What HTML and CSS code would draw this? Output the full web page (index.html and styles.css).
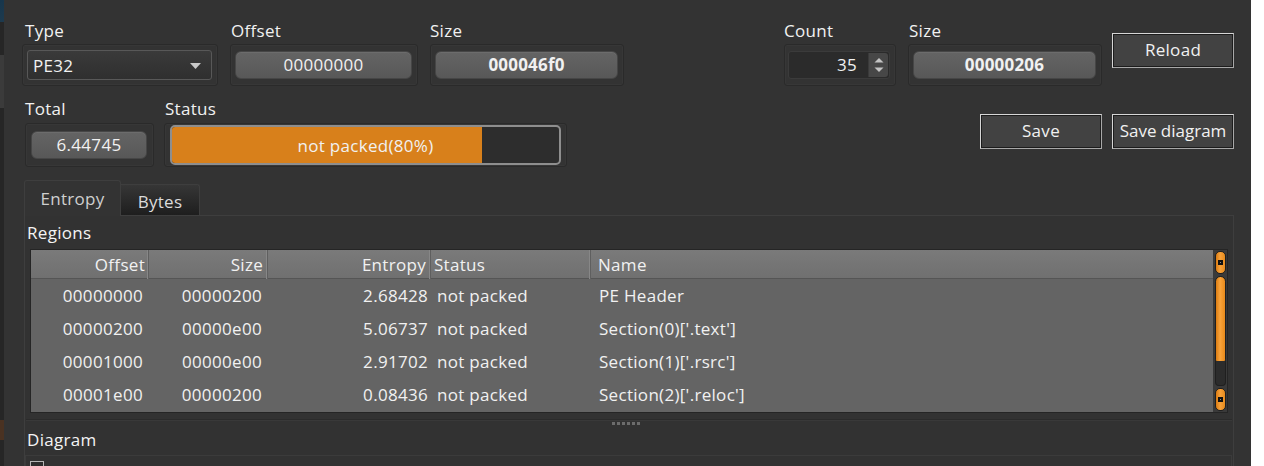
FILE: index.html
```html
<!DOCTYPE html>
<html lang="en">
<head>
<meta charset="utf-8">
<title>Entropy</title>
<link rel="stylesheet" href="styles.css">
</head>
<body>
<div class="screen">
  <div class="edge"></div>
  <main class="app">
    <div class="row row-top">
      <div class="field field-type">
        <span class="label label-type">Type</span>
        <div class="frame">
          <div class="combo">
            <span>PE32</span>
            <svg class="caret" width="11" height="6" viewBox="0 0 11 6"><path d="M0 0H11L5.5 6Z" fill="#c8c8c8"/></svg>
          </div>
        </div>
      </div>
      <div class="field field-offset">
        <span class="label">Offset</span>
        <div class="frame"><div class="value">00000000</div></div>
      </div>
      <div class="field field-size">
        <span class="label label-flush">Size</span>
        <div class="frame"><div class="value strong">000046f0</div></div>
      </div>
      <div class="spacer"></div>
      <div class="field field-count">
        <span class="label label-flush">Count</span>
        <div class="frame">
          <div class="spin">
            <span class="spin-text">35</span>
            <span class="spin-arrows">
              <svg width="10" height="16" viewBox="0 0 10 16"><path d="M0.5 5.5L5 1L9.5 5.5Z" fill="#c4c4c4"/><path d="M0.5 10.5L5 15L9.5 10.5Z" fill="#c4c4c4"/></svg>
            </span>
          </div>
        </div>
      </div>
      <div class="field field-size2">
        <span class="label">Size</span>
        <div class="frame"><div class="value strong">00000206</div></div>
      </div>
      <button class="btn btn-reload">Reload</button>
    </div>

    <div class="row row-mid">
      <div class="field field-total">
        <span class="label label-flush">Total</span>
        <div class="frame frame-tall"><div class="value value-total">6.44745</div></div>
      </div>
      <div class="field field-status">
        <span class="label">Status</span>
        <div class="frame frame-tall">
          <div class="progress">
            <div class="progress-fill" style="width:80.2%"></div>
            <span class="progress-text">not packed(80%)</span>
          </div>
        </div>
      </div>
      <div class="spacer"></div>
      <button class="btn btn-save">Save</button>
      <button class="btn btn-save-diagram">Save diagram</button>
    </div>

    <div class="tabs">
      <div class="tab tab-active">Entropy</div>
      <div class="tab tab-idle">Bytes</div>
    </div>

    <section class="panel">
      <div class="section-title">Regions</div>
      <div class="table">
        <div class="table-main">
          <div class="thead grid">
            <div class="th right th-offset">Offset</div>
            <div class="th right th-size">Size</div>
            <div class="th right th-entropy">Entropy</div>
            <div class="th th-status">Status</div>
            <div class="th th-name">Name</div>
          </div>
          <div class="tbody">
            <div class="tr grid">
              <div class="td right c1">00000000</div>
              <div class="td right c2">00000200</div>
              <div class="td right c3">2.68428</div>
              <div class="td c4">not packed</div>
              <div class="td c5">PE Header</div>
            </div>
            <div class="tr grid">
              <div class="td right c1">00000200</div>
              <div class="td right c2">00000e00</div>
              <div class="td right c3">5.06737</div>
              <div class="td c4">not packed</div>
              <div class="td c5">Section(0)['.text']</div>
            </div>
            <div class="tr grid">
              <div class="td right c1">00001000</div>
              <div class="td right c2">00000e00</div>
              <div class="td right c3">2.91702</div>
              <div class="td c4">not packed</div>
              <div class="td c5">Section(1)['.rsrc']</div>
            </div>
            <div class="tr grid">
              <div class="td right c1">00001e00</div>
              <div class="td right c2">00000200</div>
              <div class="td right c3">0.08436</div>
              <div class="td c4">not packed</div>
              <div class="td c5">Section(2)['.reloc']</div>
            </div>
          </div>
        </div>
        <div class="scrollbar">
          <div class="sb-btn"><span class="sb-dot"></span></div>
          <div class="sb-handle"></div>
          <div class="sb-groove"></div>
          <div class="sb-btn sb-btn-down"><span class="sb-dot"></span></div>
        </div>
      </div>
      <div class="splitter">
        <div class="splitter-line"></div>
        <div class="grip"><i></i><i></i><i></i><i></i><i></i><i></i></div>
      </div>
      <div class="section-title section-diagram">Diagram</div>
      <div class="diagram"><span class="checkbox"></span></div>
    </section>
  </main>
</div>
</body>
</html>
```

FILE: styles.css
```css
* {
  box-sizing: border-box;
}

html,
body {
  margin: 0;
  padding: 0;
}

body {
  background: #ffffff;
  font-family: "Open Sans", "Noto Sans", sans-serif;
  font-size: 17px;
  letter-spacing: 0.3px;
  color: #f1f1f1;
}

.screen {
  display: flex;
  width: 1251px;
  height: 466px;
  overflow: hidden;
  background: #333333;
}

/* sliver of the window behind */
.edge {
  flex: none;
  width: 4px;
  background: linear-gradient(180deg,
    #17364c 0, #1d3a4e 22px,
    #262626 22px, #262626 55px,
    #3b3b3b 55px, #3b3b3b 108px,
    #262626 108px, #262626 420px,
    #4a3222 420px, #4a3222 440px,
    #262626 440px);
}

.app {
  flex: 1;
  min-width: 0;
  display: flex;
  flex-direction: column;
  padding: 21px 17px 0 20px;
}

/* ---------- control rows ---------- */
.row {
  display: flex;
  align-items: flex-start;
}

.row-top {
  margin-left: -2px;
}

.row-mid {
  margin-top: 13px;
  margin-left: 1px;
}

.spacer {
  flex: 1;
}

.field {
  display: flex;
  flex-direction: column;
  flex: none;
}

.label {
  height: 20px;
  line-height: 20px;
  padding-left: 1px;
  white-space: nowrap;
}

.label-type {
  padding-left: 3px;
}

.label-flush {
  padding-left: 0;
}

.frame {
  display: flex;
  align-items: center;
  height: 42px;
  margin-top: 3px;
  padding: 0 5px 0 4px;
  border: 1px solid #2a2a2a;
  border-radius: 3px;
  box-shadow: inset 0 0 0 1px #373737;
}

.frame-tall {
  height: 44px;
  margin-top: 4px;
}

.field-type { width: 196px; margin-right: 12px; }
.field-offset { width: 188px; margin-right: 12px; }
.field-size { width: 194px; }
.field-count { width: 112px; margin-right: 12px; }
.field-size2 { width: 194px; margin-right: 10px; }
.field-total { width: 129px; margin-right: 10px; }
.field-status { width: 403px; }

.combo {
  flex: 1;
  height: 30px;
  display: flex;
  align-items: center;
  justify-content: space-between;
  padding: 0 10px 0 5px;
  border: 1px solid #585858;
  border-radius: 3px;
  background: linear-gradient(180deg, #3a3a3a, #2f2f2f);
}

.caret {
  display: block;
  margin-top: 1px;
}

.value {
  flex: 1;
  height: 28px;
  line-height: 26px;
  text-align: center;
  border: 1px solid #464646;
  border-radius: 6px;
  background: linear-gradient(180deg, #646464, #585858);
  box-shadow: inset 0 1px 0 #6c6c6c;
  white-space: nowrap;
}

.strong {
  font-weight: 700;
  letter-spacing: 0.2px;
}

.value-total {
  margin: 0 1px;
}

.spin {
  flex: 1;
  height: 28px;
  display: flex;
  align-items: stretch;
  margin-left: -1px;
  border: 1px solid #3b3b3b;
  border-radius: 3px;
  background: #2b2b2b;
}

.spin-text {
  flex: 1;
  text-align: right;
  line-height: 26px;
  padding-right: 11px;
}

.spin-arrows {
  width: 20px;
  margin: 1px 1px 1px 0;
  display: flex;
  align-items: center;
  justify-content: center;
  border-radius: 0 3px 3px 0;
  background: #474747;
  border-left: 1px solid #3a3a3a;
}

.spin-arrows svg {
  display: block;
}

.progress {
  position: relative;
  flex: 1;
  height: 40px;
  margin-left: 1px;
  border: 2px solid #8e8e8e;
  border-radius: 5px;
  background: #2d2d2d;
  overflow: hidden;
}

.progress-fill {
  height: 100%;
  background: #d8801b;
}

.progress-text {
  position: absolute;
  inset: 0;
  display: flex;
  align-items: center;
  justify-content: center;
  white-space: nowrap;
}

.btn {
  flex: none;
  width: 122px;
  height: 35px;
  padding: 0 0 2px;
  font: inherit;
  letter-spacing: inherit;
  color: #f1f1f1;
  background: #424242;
  border: 1px solid #d6d6d6;
  border-right-color: #a8a8a8;
  border-bottom-color: #a8a8a8;
  box-shadow: inset 0 0 0 1px #1c1c1c;
  white-space: nowrap;
}

.btn-reload {
  margin-top: 12px;
}

.btn-save {
  margin-top: 15px;
  margin-right: 10px;
}

.btn-save-diagram {
  margin-top: 15px;
  letter-spacing: 0;
}

/* ---------- tabs ---------- */
.tabs {
  position: relative;
  z-index: 1;
  display: flex;
  align-items: flex-end;
  height: 36px;
  margin-top: 13px;
}

.tab {
  display: flex;
  align-items: center;
  justify-content: center;
  border: 1px solid #3e3e3e;
  border-bottom: none;
}

.tab-active {
  width: 97px;
  height: 36px;
  padding-bottom: 1px;
  color: #cfcfcf;
  background: #333333;
  border-radius: 3px 3px 0 0;
}

.tab-idle {
  width: 79px;
  height: 31px;
  margin-bottom: 1px;
  padding-top: 2px;
  border-left: none;
  color: #dcdcdc;
  background: linear-gradient(180deg, #363636, #1e1e1e);
  border-radius: 0 3px 0 0;
}

/* ---------- panel ---------- */
.panel {
  flex: 1;
  margin-top: -1px;
  padding: 7px 5px 0 2px;
  border: 1px solid #3e3e3e;
  border-bottom: none;
  background: #323232;
  display: flex;
  flex-direction: column;
}

.section-title {
  height: 20px;
  line-height: 20px;
  color: #f4f4f4;
}

.table {
  display: flex;
  height: 164px;
  margin: 6px 0 0 3px;
  border: 1px solid #252525;
  background: #646464;
}

.table-main {
  flex: 1;
  min-width: 0;
  display: flex;
  flex-direction: column;
}

.grid {
  display: grid;
  grid-template-columns: 118px 119px 163px 160px 1fr;
}

.thead {
  height: 29px;
  background: linear-gradient(180deg, #7a7a7a, #707070);
  border-bottom: 1px solid #555555;
}

.th {
  line-height: 29px;
  white-space: nowrap;
  border-right: 1px solid #5f5f5f;
  box-shadow: inset -1px 0 0 #878787;
}

.th-name {
  border-right: none;
  box-shadow: none;
  padding-left: 7px;
}

.right {
  text-align: right;
}

.th-offset { padding-right: 3px; }
.th-size { padding-right: 4px; }
.th-entropy { padding-right: 4px; }
.th-status { padding-left: 3px; }

.tbody {
  flex: 1;
}

.tr {
  height: 33px;
}

.td {
  line-height: 34px;
  white-space: nowrap;
}

.c1 { padding-right: 6px; }
.c2 { padding-right: 6px; }
.c3 { padding-right: 3px; }
.c4 { padding-left: 6px; }
.c5 { padding-left: 8px; }

/* ---------- scrollbar ---------- */
.scrollbar {
  flex: none;
  width: 14px;
  display: flex;
  flex-direction: column;
  padding: 1px 1px 1px 2px;
  background: #3a3a3a;
}

.sb-btn,
.sb-handle {
  border: 1px solid #1f1f1f;
  background: linear-gradient(90deg, #d97a12, #f8a23a 45%, #e68a1c);
}

.sb-btn {
  height: 23px;
  border-radius: 5px;
  display: flex;
  align-items: center;
  justify-content: center;
}

.sb-btn-down {
  height: 23px;
  margin-top: 2px;
}

.sb-dot {
  width: 5px;
  height: 5px;
  background: #111111;
  box-shadow: inset 0 0 0 1px #111111, inset 0 0 0 2px #8a8a8a;
  border: 1px solid #111111;
}

.sb-handle {
  height: 89px;
  margin-top: 2px;
  border-radius: 6px;
  background: linear-gradient(90deg, #db7c12, #f9a43c 45%, #e8891a);
}

.sb-groove {
  flex: 1;
  margin-top: -4px;
  border: 1px solid #1f1f1f;
  border-top: none;
  border-radius: 0 0 4px 4px;
  background: #2c2c2c;
}

/* ---------- splitter + diagram ---------- */
.splitter {
  height: 17px;
  padding-top: 6px;
  display: flex;
  flex-direction: column;
  align-items: center;
}

.splitter-line {
  align-self: stretch;
  height: 1px;
  margin: 0 -4px 0 -1px;
  background: #2b2b2b;
  box-shadow: 0 1px 0 #393939;
}

.grip {
  display: flex;
  gap: 2px;
  margin-top: 2px;
  margin-left: -4px;
}

.grip i {
  display: block;
  width: 3px;
  height: 3px;
  background: #6c6c6c;
}

.section-diagram {
  margin-top: 0;
}

.diagram {
  flex: 1;
  margin: 5px -4px 0 -2px;
  padding: 5px 4px;
  border: 1px solid #3b3b3b;
  border-bottom: none;
}

.checkbox {
  display: block;
  width: 14px;
  height: 14px;
  border: 1px solid #b5b5b5;
  background: #2e2e2e;
}
```
